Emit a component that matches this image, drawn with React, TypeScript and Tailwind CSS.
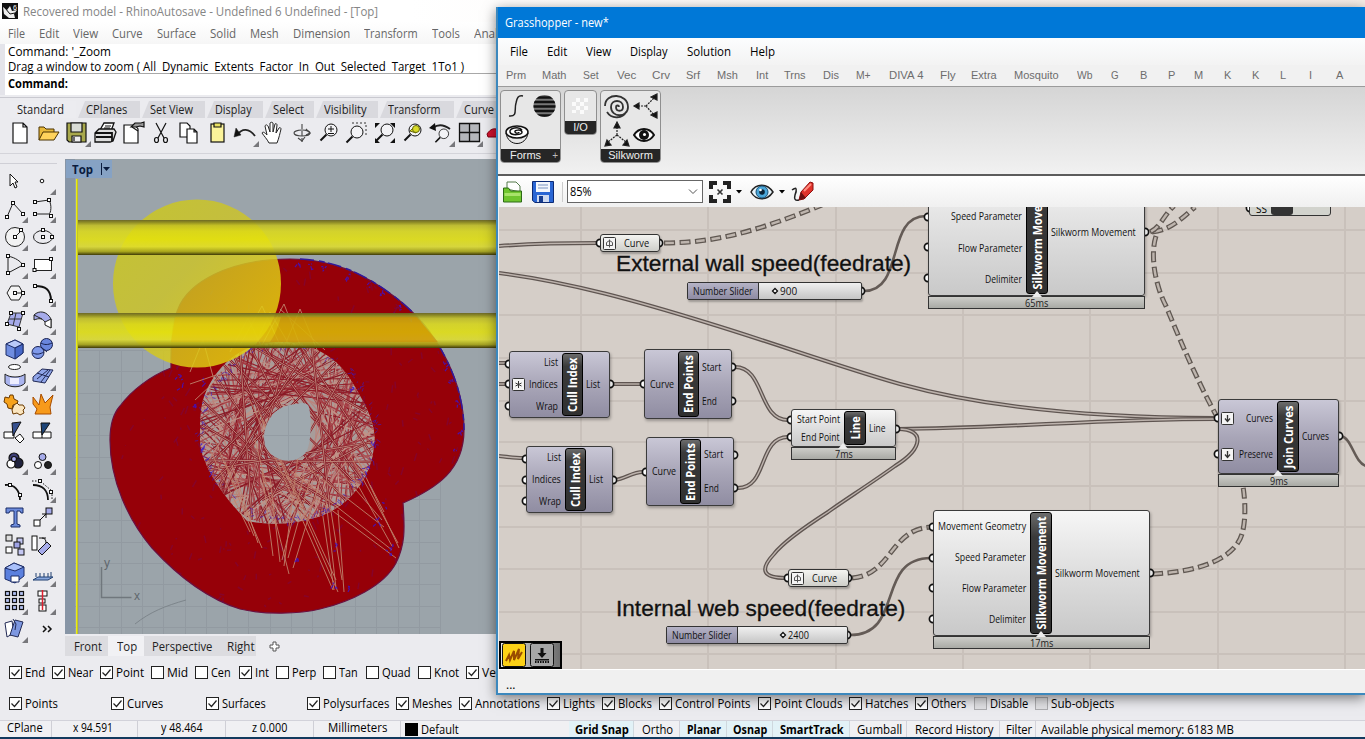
import React, { useLayoutEffect, useRef, useState } from "react";

/* Text squeezed or stretched to a given advance width */
function Fit({ w, children, className = "" }: { w: number; children: string; className?: string }) {
  const ref = useRef<HTMLSpanElement>(null);
  const [s, setS] = useState(1);
  useLayoutEffect(() => {
    const o = ref.current ? ref.current.offsetWidth : 0;
    if (o) setS(w / o);
  }, [w, children]);
  return (
    <span className={`inline-block shrink-0 ${className}`} style={{ width: w }}>
      <span ref={ref} className="inline-block origin-left whitespace-pre" style={{ transform: `scaleX(${s})` }}>
        {children}
      </span>
    </span>
  );
}

type Item = [string, number, number];

function Labels({ items, className = "" }: { items: Item[]; className?: string }) {
  return (
    <div className={`flex items-center ${className}`}>
      {items.map(([t, slot, w], i) => (
        <div key={i} className="flex shrink-0" style={{ width: slot }}>
          <Fit w={w}>{t}</Fit>
        </div>
      ))}
    </div>
  );
}

/* ---------- deterministic noise ---------- */
function rng(seed: number) {
  let s = seed;
  return () => {
    s = (s * 1664525 + 1013904223) % 4294967296;
    return s / 4294967296;
  };
}

/* ---------- toolbar icons, 28 x 28 ---------- */
const K = "#111";
const Lens = ({ children }: { children?: React.ReactNode }) => (
  <g fill="none" stroke={K} strokeWidth="1">
    <circle cx="16" cy="11" r="6" fill="#f3f3f6" />
    <path d="M11.500 15.500l-6 6" strokeWidth="2" />
    {children}
  </g>
);

const topIcons: [React.ReactNode, boolean][] = [
  [<path d="M6 4h10l4 4v16H6zM16 4v4h4" fill="#fff" stroke={K} strokeWidth="1.2" />, false],
  [<g stroke="#4a3200" strokeWidth="1"><path d="M4 21V8h5l2 2h8v3" fill="#e8b93a" /><path d="M4 21l4-8h16l-5 8z" fill="#ffd35c" /></g>, false],
  [<g stroke={K} strokeWidth="1.2"><path d="M4 4h19v19H6l-2-2z" fill="#a9a94c" /><path d="M8 4h11v9H8z" fill="#d9dcd6" /><path d="M9 17h9v6H9z" fill="#eee" /><path d="M11 18v4" /></g>, true],
  [<g stroke={K} strokeWidth="1.3" fill="#ddd"><path d="M9 11l4-7h10l-3 8z" fill="#fff" /><path d="M4 14l4-4h15l2 3-3 9-3 1H4z" /><path d="M4 14h17v8M5 18h16" strokeWidth="1.800" /><path d="M14 7h6M13 9h6" strokeWidth="1" /></g>, false],
  [<g stroke={K} strokeWidth="1.2"><path d="M5 6h11l3 4v14H5z" fill="#fff" /><path d="M12 8l4-4h6l3-1v5l-4-1-4 1z" fill="#999" /><path d="M13 8l6 4" /></g>, false],
  [<g stroke={K} strokeWidth="1.200" fill="none"><path d="M9 4l8 15M19 4l-8 15" /><ellipse cx="9.500" cy="21" rx="2" ry="2.500" /><ellipse cx="18.500" cy="21" rx="2" ry="2.500" /></g>, false],
  [<g stroke={K} strokeWidth="1.200" fill="#fff"><path d="M5 4h7l3 3v11H5z" /><path d="M12 10h7l3 3v11H12zM19 10v3h3" /></g>, false],
  [<g stroke={K} strokeWidth="1.200"><rect x="8" y="5" width="13" height="18" fill="#fbf39a" /><path d="M11 4h7v4h-7z" fill="#e8e060" /></g>, false],
  [<g fill="none" stroke="#222"><path d="M6 16c5-7 12-7 18 1" strokeWidth="1.800" /><path d="M3 18l2-9 5 7z" fill="#111" strokeWidth=".5" /></g>, true],
  [<path d="M10 24c-2-4-5-7-7-10 1-2 3 0 5 2L6 7c1-2 2-1 3 0l2 6V4c1-1 2-1 3 0v9l2-8c1-1 2 0 2 1l-1 8 3-5c1-1 2 0 2 1-1 4-2 9-4 14z" fill="#fff" stroke="#222" strokeWidth="1" />, false],
  [<g fill="none" stroke="#444" strokeWidth="1.100"><ellipse cx="15" cy="14" rx="8" ry="3" /><path d="M15 5v18" strokeDasharray="5 2" /><path d="M11 19l4 3 3-4M19 10l4 4-4 2" /></g>, false],
  [<Lens><path d="M13 10h6M16 7v6M13 14.500h6" /></Lens>, false],
  [<g><path d="M9 4h14v12" fill="none" stroke="#333" strokeDasharray="2 2" /><g transform="translate(-2 2)"><Lens /></g></g>, false],
  [<g fill="#111"><Lens /><path d="M4 4h5l-5 5zM24 4v5l-5-5zM24 24h-5l5-5zM4 24v-5l5 5z" /></g>, false],
  [<g><Lens /><path d="M11 12l4-4 5 0-3 6z" fill="#e3e12c" stroke="#6a6a10" /><circle cx="17" cy="10" r="3.500" fill="#d9dc28" stroke="#66690a" /></g>, false],
  [<g><g transform="translate(4 6) scale(.8)"><Lens /></g><path d="M6 9c5-4 10-4 17 1" fill="none" stroke="#222" strokeWidth="2" /><path d="M2 9l6-5 1 8z" fill="#111" /></g>, true],
  [<path d="M4.500 4.500h20v18h-20zM14.500 4v19M4 13.500h20" fill="#b4b6bb" stroke={K} strokeWidth="1.300" />, true],
  [<path d="M4 15c2-3 5-6 9-5l6 1v7H5z" fill="#d3122e" stroke="#7d0012" />, false],
];

const sq = (x: number, y: number, f = "#fff") => <rect key={`${x}-${y}`} x={x - 1.5} y={y - 1.5} width="3" height="3" fill={f} stroke={K} strokeWidth="1" />;
const B1 = "#8fa4e8";
const L1 = "#a6abea";

const sideIcons: [React.ReactNode, boolean][] = [
  [<path d="M10 7v12l3-3 2 5 2-1-2-5h3z" fill="#fff" stroke={K} />, false],
  [<circle cx="14" cy="14" r="1.800" fill="#fff" stroke={K} />, true],
  [<g fill="none" stroke="#222"><path d="M7 22l6-14 10 11" />{sq(7, 22)}{sq(13, 8)}{sq(23, 19)}</g>, true],
  [<g fill="none" stroke="#222"><path d="M7 7l14-2c3 5 2 13 0 14L7 19" />{sq(7, 7)}{sq(21, 5)}{sq(7, 19)}{sq(23, 21)}</g>, true],
  [<g fill="none" stroke="#222"><circle cx="15" cy="14" r="9.500" fill="#f2f2f2" /><path d="M15 14l7-7" />{sq(15, 14)}{sq(21, 7)}</g>, true],
  [<g fill="none" stroke="#222"><ellipse cx="15" cy="14" rx="9.500" ry="6.500" />{sq(15, 7)}{sq(15, 14)}{sq(24, 14)}</g>, true],
  [<g fill="none" stroke="#222"><path d="M8 5c8 2 12 5 15 9L8 22z" />{sq(8, 5)}{sq(23, 14)}{sq(8, 22)}</g>, true],
  [<g fill="none" stroke="#222"><rect x="6.500" y="8.500" width="17" height="11" fill="#fff" />{sq(6.5, 19)}{sq(23, 8)}</g>, true],
  [<g fill="none" stroke="#222"><path d="M7 14l4-7h8l4 7-4 7h-8z" fill="#f4f4f4" /><path d="M15 14h8" />{sq(15, 14)}{sq(23, 14)}</g>, true],
  [<g fill="none" stroke="#111"><path d="M7 7c10 0 16 3 16 15" strokeWidth="2" />{sq(7, 7)}{sq(23, 22)}</g>, true],
  [<g stroke="#333"><path d="M11 6l12 0-4 14-12-3z" fill={L1} /><path d="M9 12h12M16 6l-3 13" fill="none" />{sq(11, 6)}{sq(23, 6)}{sq(7, 17)}{sq(19, 22)}</g>, true],
  [<g stroke="#222"><path d="M6 8c5-5 13-4 17 4v9l-6-6C14 11 11 11 6 13z" fill={L1} /><path d="M6 8l8 4M17 15l6-3v9l-6-3z" fill="#fff" /></g>, true],
  [<g stroke="#1d2c66"><path d="M6 9l9-4 8 4v9l-8 6-9-4z" fill="#6f8de0" /><path d="M6 9l9-4 8 4-8 4z" fill="#b9c9f8" /><path d="M15 13v11l8-6V9z" fill="#4768c8" /></g>, true],
  [<g stroke="#17204f"><circle cx="18.500" cy="9.500" r="6" fill="#6a86dd" /><circle cx="10" cy="17.500" r="6" fill="#7f99ea" /><path d="M13 12l6 5M5 18c4 2 7 1 11-1M13 8c3 2 7 2 11 0" fill="none" /></g>, true],
  [<g stroke="#222"><ellipse cx="14.500" cy="4" rx="6" ry="2.500" fill="#fff" /><path d="M5 11v9c4 5 16 5 20 0v-9c-4 4-16 4-20 0z" fill="#aab4ee" /><path d="M10 15h9v6h-9z" fill="#eef" stroke="none" /></g>, true],
  [<g stroke="#222a55"><path d="M5 14l9-8 11 1-8 13-12-2z" fill={B1} /><path d="M9 16l11-9M13 19l9-12M9 10l12 4" fill="none" /></g>, true],
  [<g stroke="#6b3a00"><path d="M5 6l4 1 1-3h3l1 4 4 2-1 3-4 1-1 4-4-1-1-4-3-2z" fill="#f6a21c" /><path d="M14 14l3-2 2 2 4 0 2 3-2 2 1 3-4 2-3-2-4 1-1-4z" fill="#fbe6c0" /></g>, false],
  [<path d="M5 6l6 8 2-11 4 9 8-8-3 12 1 7H7l2-5-4-5z" fill="#f79a1b" stroke="#a74c00" />, false],
  [<g stroke="#111"><path d="M4 13h10v6H4z" fill="#fff" /><path d="M15 19l5-4 4 5-4 4z" fill="#fff" /><path d="M12 4l9-1-8 14z" fill="#36508f" /></g>, false],
  [<g stroke="#111"><path d="M5 13h18v6H5zM14 13v6" fill="#fff" /><path d="M13 4h9l-8 12z" fill="#1d4478" /></g>, false],
  [<g stroke="#111" strokeWidth="1.200"><circle cx="14" cy="11" r="5" fill="#3c3d75" /><circle cx="18" cy="16" r="5" fill="#20233e" /><circle cx="11" cy="17" r="4" fill="#fff" /><circle cx="14" cy="12" r="2.500" fill="#a9acf0" /></g>, true],
  [<g stroke="#111"><circle cx="14.500" cy="10" r="3.500" fill={L1} /><circle cx="10" cy="18" r="3.500" fill="#fff" /><circle cx="20" cy="18" r="3.500" fill="#222" /></g>, true],
  [<g fill="none" stroke="#111"><path d="M5 10c9-1 15 5 15 15" strokeWidth="1.800" />{sq(10, 10)}{sq(20, 20)}</g>, false],
  [<g fill="none" stroke="#111"><path d="M5 10c9 0 15 5 15 15" strokeWidth="1.800" /><path d="M4 6h8l12 10v9" strokeDasharray="1.500 1.500" />{sq(12, 6)}{sq(23, 17)}</g>, true],
  [<path d="M6 5h17v5h-2l-1-2h-3v13l3 1v2h-9v-2l3-1V8h-4l-1 2H6z" fill="#6c8bdc" stroke="#1b2c66" />, false],
  [<g stroke="#111"><rect x="6" y="17" width="6" height="6" fill="#fff" /><rect x="18" y="5" width="6" height="6" fill={L1} /><path d="M12 17l6-6M14 11h4v4" fill="none" /></g>, true],
  [<g stroke="#111" fill="#c4c7f2"><rect x="6" y="4" width="6" height="6" fill="#ddd" /><rect x="17" y="7" width="6" height="6" /><rect x="14" y="11" width="6" height="6" fill="#9fa3e4" /><rect x="6" y="16" width="6" height="6" fill="#fff" /><rect x="18" y="18" width="6" height="6" /></g>, false],
  [<g stroke="#111"><rect x="4" y="5" width="5" height="14" fill="#fff" /><path d="M11 7h7M14 7c3 0 4 2 4 5" fill="none" /><path d="M10 20l9-9 4 4-9 9z" fill={L1} /></g>, false],
  [<g stroke="#1d2c66"><path d="M5 9l9-5 10 4v9l-9 7-10-4z" fill="#5b80de" /><path d="M5 9l9-5 10 4-9 4z" fill="#a9c0fa" /><path d="M11 17h8v6h-8z" fill="#fff" /></g>, true],
  [<g stroke="#1f3f70" fill="none"><path d="M5 21l5-3h15l-5 3z" fill="#89a7dd" /><path d="M8 14v4M12 14v4M16 14v4M20 14v4M23 13v5" /></g>, true],
  [<g>{[5.5, 12.5, 19.5].map((x) => [4.5, 11.5, 18.5].map((y) => <rect key={`${x}${y}`} x={x} y={y} width="4" height="4" fill="#b4c2f3" stroke="#111" strokeWidth="1.200" />))}</g>, true],
  [<g stroke="#111" fill="#fff"><rect x="10" y="4" width="9" height="5" /><rect x="11" y="12" width="6" height="4" /><rect x="11" y="18" width="7" height="6" /><path d="M14.500 3v20" stroke="#e02030" strokeWidth="1.500" /></g>, true],
  [<g stroke="#222a55"><path d="M5 8l7-2 2 12-7 4z" fill="#fff" /><path d="M15 5l8 2-5 15-8-2z" fill="#7d97e0" /><path d="M13 4l3 5-1 6" fill="none" /></g>, true],
  [<path d="M16 11l3 3-3 3M21 11l3 3-3 3" transform="translate(-1 0)" fill="none" stroke="#111" strokeWidth="1.500" />, false],
];

function Ico({ icon, corner }: { icon: React.ReactNode; corner: boolean }) {
  return (
    <svg width="28" height="28" viewBox="0 0 28 28" className="block shrink-0">
      {icon}
      {corner && <path d="M28 22v6h-6z" fill="#77777b" />}
    </svg>
  );
}

/* ---------- model viewport ---------- */
const BODY =
  "M110 440C110 425 113 414 120 406C131 391 150 376 171 368C171 345 171 325 178 309C188 283 228 259 290 259C330 259 362 272 395 297C440 331 464 385 464 430C464 470 437 488 403 503C405 530 405 545 396 563C384 586 350 602 320 609C300 614 265 615 240 609C205 598 175 573 152 548C128 520 110 480 110 440Z";
const WEB = "M203 400C212 372 232 352 258 345C300 335 335 352 352 382C366 405 377 425 374 445C372 480 345 512 310 519C285 526 262 524 247 521C232 505 201 470 200 440C200 425 200 412 203 400Z";

function buildWeb() {
  const r = rng(11);
  const out: { d: string; c: string; w: number }[] = [];
  const cols = ["#93202b", "#a53a42", "#bb837c", "#8a1a26", "#ab5053", "#c09488"];
  for (let i = 0; i < 210; i++) {
    const a = (i / 210) * Math.PI * 2 + r() * 0.05;
    const delta = Math.PI * (0.5 + r() * 0.33) * (i % 2 ? 1 : -1);
    const p = (t: number) => [288 + Math.cos(t) * 90, 434 + Math.sin(t) * 93];
    const [x1, y1] = p(a);
    const [x2, y2] = p(a + delta);
    out.push({ d: `M${x1.toFixed(1)} ${y1.toFixed(1)}L${x2.toFixed(1)} ${y2.toFixed(1)}`, c: cols[Math.floor(r() * cols.length)], w: 0.8 + r() * 0.6 });
  }
  return out;
}

function buildSpecks() {
  const r = rng(5);
  const out: { d: string; c: string; o: number }[] = [];
  for (let i = 0; i < 150; i++) {
    const a = r() * Math.PI * 2;
    const k = 0.95 + r() * 0.09;
    const x = 288 + Math.cos(a) * 87 * k;
    const y = 432 + Math.sin(a) * 88 * k;
    if (y > 500 && x < 250) continue;
    out.push({ d: `M${x.toFixed(1)} ${y.toFixed(1)}l${(r() * 8 - 4).toFixed(1)} ${(r() * 9 - 4).toFixed(1)}`, c: "#3a1cc0", o: 0.65 });
  }
  for (let i = 0; i < 330; i++) {
    const x = 115 + r() * 345;
    const y = 262 + r() * 345;
    out.push({ d: `M${x.toFixed(1)} ${y.toFixed(1)}l${(r() * 8 - 3).toFixed(1)} ${(r() * 16 - 8).toFixed(1)}`, c: "#650a78", o: 0.3 });
  }
  return out;
}
const web = buildWeb();
const specks = buildSpecks();
const rimSpecks = (() => {
  const r = rng(3);
  const pts: [number, number][] = [[300, 262], [312, 265], [325, 268], [350, 276], [370, 284], [383, 293], [400, 306], [412, 317], [446, 364], [452, 380], [458, 402], [460, 430], [455, 450], [393, 545], [390, 553], [385, 505], [378, 520], [350, 586], [335, 585], [338, 547], [297, 560], [205, 380], [180, 377], [196, 405], [203, 447], [213, 475], [182, 385], [368, 470], [375, 443], [355, 388]];
  return pts.flatMap(([x, y]) => Array.from({ length: 4 }, () => `M${(x + r() * 5 - 3).toFixed(1)} ${(y + r() * 7 - 3).toFixed(1)}l${(r() * 5 - 3).toFixed(1)} ${(r() * 6 - 2).toFixed(1)}`));
})();
const spikes = [
  "M215 440L254 536", "M232 465L258 543", "M210 450L250 532", "M225 462L262 548", "M255 440L289 574", "M300 440L284 566", "M262 470L273 556", "M270 478L280 562",
  "M320 480L293 568", "M310 480L288 558", "M304 476L282 560", "M250 400L333 590", "M262 420L338 592", "M258 410L336 580", "M322 510L334 590", "M330 505L342 580", "M338 510L344 592", "M326 500L336 588",
  "M275 468L396 558", "M290 470L392 550", "M300 462L384 527", "M350 455L398 543", "M345 462L392 546", "M358 460L399 548", "M330 460L382 520", "M370 485L384 512",
];
const chords = [
  "M205 360L300 500", "M215 355L345 500", "M232 352L305 510", "M250 346L330 505", "M200 398L310 505", "M203 425L340 508", "M226 356L352 480", "M262 344L360 478", "M288 344L248 505", "M320 350L205 470", "M336 362L215 480", "M240 350L252 520",
  "M366 412L250 345", "M372 440L262 500", "M205 460L374 462", "M208 470L372 442", "M220 485L310 345", "M300 345L372 455", "M312 348L330 510", "M258 520L345 372",
];

function Viewport() {
  const gx = Array.from({ length: 18 }, (_, i) => 78.5 + Math.round(i * 21.3));
  const gy = Array.from({ length: 14 }, (_, i) => 350.5 + Math.round(i * 21.3));
  return (
    <div className="relative h-[475px] w-[432px] overflow-hidden bg-[#9ba4aa]">
      <svg width="432" height="475" viewBox="65 159 432 475" className="block">
        <defs>
          <linearGradient id="cyl" x1="0" y1="0" x2="0" y2="1">
            <stop offset="0" stopColor="#6a6522" stopOpacity=".95" />
            <stop offset=".07" stopColor="#8f8c20" stopOpacity=".95" />
            <stop offset=".16" stopColor="#c5c120" stopOpacity=".86" />
            <stop offset=".32" stopColor="#dedb14" stopOpacity=".84" />
            <stop offset=".55" stopColor="#e6e30a" stopOpacity=".84" />
            <stop offset=".76" stopColor="#e2df28" stopOpacity=".84" />
            <stop offset=".9" stopColor="#a5a218" stopOpacity=".92" />
            <stop offset="1" stopColor="#3d3808" />
          </linearGradient>
          <linearGradient id="sph" x1="0" y1="0" x2="1" y2=".9">
            <stop offset="0" stopColor="#cbc91c" stopOpacity=".85" />
            <stop offset=".45" stopColor="#cdc426" stopOpacity=".82" />
            <stop offset="1" stopColor="#ead208" stopOpacity=".86" />
          </linearGradient>
          <clipPath id="webclip"><path d={WEB} /></clipPath>
          <clipPath id="bodyclip"><path d={BODY} /></clipPath>
        </defs>
        <g stroke="#8f979e" strokeWidth="1" opacity=".75">
          {gx.map((x) => <path key={x} d={`M${x} 350V634`} />)}
          {gy.map((y) => <path key={y} d={`M65 ${y}H440`} />)}
        </g>
        <rect x="65" y="159" width="10" height="475" fill="#8795a6" />
        <path d="M135 624C150 612 165 606 186 600" fill="none" stroke="#7d858b" />
        <path d="M101.500 567v30.500h30" fill="none" stroke="#70777d" strokeWidth="1.500" />
        <text x="104" y="567" fontFamily="Liberation Sans" fontSize="12" fill="#60676d">y</text>
        <text x="134" y="600" fontFamily="Liberation Sans" fontSize="12" fill="#60676d">x</text>
        <path d={BODY} fill="#960008" stroke="#6a1040" strokeWidth="1.200" />
        <path d="M300 259C335 261 362 272 395 297C440 331 464 385 464 430" fill="none" stroke="#31189c" strokeWidth="1.500" strokeDasharray="14 5 6 3" />
        <g clipPath="url(#bodyclip)" fill="none">
          {specks.filter((s) => s.o < 0.5).map((s, i) => <path key={i} d={s.d} stroke={s.c} opacity={s.o} strokeWidth="1.500" />)}
        </g>
        <path d={WEB} fill="#a89c9a" />
        <g clipPath="url(#webclip)" fill="none">
          {web.map((l, i) => <path key={i} d={l.d} stroke={l.c} strokeWidth={l.w} />)}
          {chords.map((d) => <g key={d}><path d={d} stroke="#841824" strokeWidth="2.200" /><path d={d} stroke="#c38d80" strokeWidth=".9" /></g>)}
        </g>
        <g fill="none" stroke="#c0826c" strokeWidth=".9">
          {spikes.map((d) => <path key={d} d={d} />)}
          <path d="M190 372L203 340L214 380M195 400L225 372L190 384M230 352L248 318L262 348M240 345L262 306L280 345M255 346L270 312L290 346M262 345L284 304L300 345M285 345L300 309L318 352M280 309L325 350" />
        </g>
        <path d="M264 437C265 420 276 407 290 405C299 403 307 401 309 407C312 420 311 445 306 452C300 462 284 463 275 457C268 453 264 445 264 437Z" fill="#9fa8ae" />
        <path d="M288.500 406v55M265 435.500h45" stroke="#949ca3" />
        <g fill="none">
          {specks.filter((s) => s.o > 0.5).map((s, i) => <path key={i} d={s.d} stroke={s.c} opacity={s.o} />)}
        </g>
        <g stroke="#3a14d0" fill="none" strokeWidth="1.200" opacity=".8">{rimSpecks.map((d, i) => <path key={i} d={d} />)}</g>
        <circle cx="197" cy="283.500" r="84" fill="url(#sph)" />
        <rect x="77" y="220" width="420" height="35" fill="url(#cyl)" />
        <rect x="77" y="313" width="420" height="35" fill="url(#cyl)" />
        <path d="M175 317H281Q277 332 270 342H171z" fill="#e6b400" opacity=".3" />
        <path d="M281 317H417L438 342H270Q277 332 281 317z" fill="#cc8800" opacity=".5" />
        <path d="M76.500 179V634" stroke="#e9ec18" strokeWidth="1" />
        <path d="M77.500 179V634" stroke="#c3c622" strokeWidth="1" />
      </svg>
      <div className="absolute top-px left-px flex h-[18px] w-[46px] items-center bg-[#86a2c4] pl-1.5 text-[12px] font-bold text-[#0b1c3e]">
        <Fit w={21}>Top</Fit>
        <svg width="12" height="14" className="ml-[7px]"><path d="M1.500 1v12" stroke="#0b1c3e" /><path d="M3 5h7l-3.500 4z" fill="#0b1c3e" /></svg>
      </div>
    </div>
  );
}

/* ---------- Rhino bottom rows ---------- */
type Check = [string, number, number, 0 | 1 | 2];
function Checks({ items, className }: { items: Check[]; className: string }) {
  return (
    <div className={`flex items-center pl-[9px] text-[12px] text-black ${className}`}>
      {items.map(([t, slot, w, st]) => (
        <div key={t} className="flex shrink-0 items-center gap-[3px]" style={{ width: slot }}>
          <svg width="13" height="13" className={st === 2 ? "shrink-0 opacity-30" : "shrink-0"}>
            <rect x=".5" y=".5" width="12" height="12" fill={st === 2 ? "#ccc" : "#fff"} stroke="#222" />
            {st === 1 && <path d="M2.500 6.500l3 3 5-6" fill="none" stroke="#222" strokeWidth="1.200" />}
          </svg>
          <Fit w={w}>{t}</Fit>
        </div>
      ))}
    </div>
  );
}

const osnaps: Check[] = [["End", 43, 20, 1], ["Near", 48, 25, 1], ["Point", 51, 28, 1], ["Mid", 44, 21, 0], ["Cen", 44, 20, 0], ["Int", 37, 14, 1], ["Perp", 47, 24, 0], ["Tan", 43, 19, 0], ["Quad", 52, 29, 0], ["Knot", 48, 25, 0], ["Vertex", 60, 36, 1]];
const filters: Check[] = [["Points", 102, 33, 1], ["Curves", 95, 36, 1], ["Surfaces", 101, 44, 1], ["Polysurfaces", 89, 66, 1], ["Meshes", 63, 40, 1], ["Annotations", 88, 65, 1], ["Lights", 55, 32, 1], ["Blocks", 57, 34, 1], ["Control Points", 99, 76, 1], ["Point Clouds", 91, 68, 1], ["Hatches", 66, 43, 1], ["Others", 59, 35, 1], ["Disable", 61, 38, 2], ["Sub-objects", 90, 63, 2]];
const rhinoTabs: Item[] = [["Standard", 75, 47], ["CPlanes", 64, 41], ["Set View", 65, 43], ["Display", 58, 37], ["Select", 51, 31], ["Visibility", 64, 43], ["Transform", 76, 53], ["Curve Tools", 60, 60]];
const panes: [string, number, number, boolean][] = [["Grid Snap", 65, 54, true], ["Ortho", 46, 31, false], ["Planar", 47, 34, true], ["Osnap", 46, 34, true], ["SmartTrack", 77, 64, true], ["Gumball", 57, 45, false], ["Record History", 93, 78, false], ["Filter", 36, 26, false]];

function Rhino() {
  return (
    <div className="flex h-[739px] w-[1365px] flex-col bg-[#ebebef]">
      <div className="flex h-[22px] shrink-0 items-center bg-gradient-to-r from-white from-30% to-[#f5ece6] pl-[2px] text-[12px] text-[#858585]">
        <svg width="17" height="17" viewBox="0 0 17 17" className="mr-1 shrink-0"><rect width="16" height="16" fill="#111" /><path d="M1 4l4 3 3-4 2 5 5-1-3 4 1 4H7l-5-4z" fill="#eee" /><path d="M3 5l5 6 5-1M9 2l2 4" stroke="#111" fill="none" /><text x="11" y="7" fontSize="7" fill="#fff" fontFamily="Liberation Sans">6</text></svg>
        <Fit w={355}>Recovered model - RhinoAutosave - Undefined 6 Undefined - [Top]</Fit>
      </div>
      <Labels
        className="h-[22px] shrink-0 bg-gradient-to-b from-white to-[#f6f6f6] pl-2 text-[12px] text-[#666]"
        items={[["File", 31, 17], ["Edit", 34, 20], ["View", 39, 25], ["Curve", 45, 31], ["Surface", 53, 39], ["Solid", 40, 26], ["Mesh", 43, 29], ["Dimension", 71, 57], ["Transform", 68, 54], ["Tools", 42, 28], ["Analyze", 48, 42]]}
      />
      <div className="flex h-[51px] w-[600px] shrink-0 flex-col border-l-[5px] border-[#e4e4ea] bg-white pl-[3px] text-[12px] text-black">
        <div className="flex h-[15px] items-center"><Fit w={103}>Command: '_Zoom</Fit></div>
        <div className="flex h-[15px] items-center border-b border-[#a8a8a8]"><Fit w={456}>Drag a window to zoom ( All  Dynamic  Extents  Factor  In  Out  Selected  Target  1To1 )</Fit></div>
        <div className="flex h-[18px] items-center font-bold"><Fit w={60}>Command:</Fit></div>
      </div>
      <div className="mt-[2px] h-px shrink-0 bg-[#c9c9d0]" />
      <div className="mt-[3px] flex h-[17px] shrink-0 items-stretch pl-[10px] text-[12px] text-[#222]">
        {rhinoTabs.map(([t, slot, w], i) => (
          <div key={t} className={i === 0 ? "flex items-center bg-[#ececf0] pl-[7px]" : "flex items-center"} style={{ width: i === 0 ? slot - 9 : slot }}>
            {i > 0 && <svg width="10" height="17" className="shrink-0"><path d="M9 0L2 17h8V0z" fill="#d9d9de" /></svg>}
            {i === 0 ? <Fit w={w}>{t}</Fit> : <div className="flex h-[17px] grow items-center bg-[#d9d9de]"><Fit w={w}>{t}</Fit></div>}
          </div>
        ))}
      </div>
      <div className="flex h-[35px] shrink-0 pt-px pl-[7px]">
        {topIcons.map(([ic, c], i) => <Ico key={i} icon={ic} corner={c} />)}
      </div>
      <div className="mb-[4px] h-[2px] shrink-0 border-t border-[#d4d4da]" />
      <div className="flex h-[475px] shrink-0">
        <div className="w-[65px] shrink-0 pt-[4px]">
          <div className="mb-[3px] h-px w-[57px] bg-[#cfcfd6]" />
          <div className="grid w-[56px] grid-cols-2">
            {sideIcons.map(([ic, c], i) => <Ico key={i} icon={ic} corner={c} />)}
          </div>
        </div>
        <Viewport />
      </div>
      <div className="flex h-[24px] shrink-0 items-center pl-[65px] text-[12px] text-[#222]">
        <div className="flex h-[20px] w-[43px] items-center bg-[#dcdce0] pl-[9px]"><Fit w={28}>Front</Fit></div>
        <div className="flex h-[20px] w-[36px] items-center bg-[#f1f1f4] pl-[9px]"><Fit w={20}>Top</Fit></div>
        <div className="flex h-[20px] w-[75px] items-center bg-[#dcdce0] pl-[8px]"><Fit w={60}>Perspective</Fit></div>
        <div className="flex h-[20px] w-[37px] items-center bg-[#dcdce0] pl-[8px]"><Fit w={28}>Right</Fit></div>
        <svg width="26" height="20" className="ml-[6px]"><path d="M11 6h3v3h3v3h-3v3h-3v-3H8V9h3z" fill="#fff" stroke="#555" /></svg>
      </div>
      <Checks items={osnaps} className="h-[28px] w-[497px] shrink-0 overflow-hidden" />
      <Checks items={filters} className="h-[35px] shrink-0 border-b border-[#d2d2da]" />
      <div className="flex min-h-0 grow items-center overflow-hidden bg-[#f0f0f3] pl-[7px] text-[12px] text-black">
        <div className="flex w-[66px]"><Fit w={36}>CPlane</Fit><i className="ml-2 h-[18px] w-px bg-[#cfcfd6]" /></div>
        <div className="flex w-[88px]"><Fit w={40}>x 94.591</Fit><i className="ml-6 h-[18px] w-px bg-[#cfcfd6]" /></div>
        <div className="flex w-[91px]"><Fit w={42}>y 48.464</Fit><i className="ml-[22px] h-[18px] w-px bg-[#cfcfd6]" /></div>
        <div className="flex w-[76px]"><Fit w={35}>z 0.000</Fit><i className="ml-[26px] h-[18px] w-px bg-[#cfcfd6]" /></div>
        <div className="flex w-[77px]"><Fit w={59}>Millimeters</Fit><i className="ml-[13px] h-[18px] w-px bg-[#cfcfd6]" /></div>
        <div className="flex w-[164px] items-center"><div className="mr-[3px] h-[13px] w-[13px] bg-black" /><Fit w={38}>Default</Fit></div>
        {panes.map(([t, slot, w, on]) => (
          <div key={t} className={on ? "flex h-[20px] items-center justify-center border-r border-[#cfd8de] bg-[#e2f2f7] pl-px font-bold" : "flex h-[20px] items-center justify-center border-r border-[#d2d2da] pl-[2px]"} style={{ width: slot }}>
            <Fit w={w}>{t}</Fit>
          </div>
        ))}
        <Fit w={193} className="ml-[5px]">Available physical memory: 6183 MB</Fit>
      </div>
      <div className="h-[2px] shrink-0 bg-[#123a5e]" />
    </div>
  );
}

/* ---------- Grasshopper canvas ---------- */
type Port = [string, number, string?];
interface NodeP { x: number; y: number; w: number; h: number; bar: number; barW: number; title: string; tw: number; ins: Port[]; outs: Port[]; ms?: string; light?: boolean }

const nodes: NodeP[] = [
  { x: 928, y: 169, w: 217, h: 127, bar: 1026, barW: 22, title: "Silkworm Movement", tw: 113, light: true, ms: "65ms", ins: [["Movement Geometry", 88], ["Speed Parameter", 71], ["Flow Parameter", 64], ["Delimiter", 37]], outs: [["Silkworm Movement", 85]] },
  { x: 509, y: 351, w: 101, h: 67, bar: 562, barW: 21, title: "Cull Index", tw: 54, ins: [["List", 14], ["Indices", 29, "*"], ["Wrap", 22]], outs: [["List", 14]] },
  { x: 644, y: 349, w: 88, h: 70, bar: 678, barW: 21, title: "End Points", tw: 58, ins: [["Curve", 24]], outs: [["Start", 19], ["End", 15]] },
  { x: 526, y: 446, w: 87, h: 67, bar: 565, barW: 21, title: "Cull Index", tw: 54, ins: [["List", 14], ["Indices", 29], ["Wrap", 22]], outs: [["List", 14]] },
  { x: 646, y: 437, w: 88, h: 69, bar: 680, barW: 21, title: "End Points", tw: 58, ins: [["Curve", 24]], outs: [["Start", 19], ["End", 15]] },
  { x: 791, y: 409, w: 105, h: 38, bar: 844, barW: 22, title: "Line", tw: 23, light: true, ms: "7ms", ins: [["Start Point", 43], ["End Point", 39]], outs: [["Line", 17]] },
  { x: 1218, y: 399, w: 121, h: 75, bar: 1277, barW: 22, title: "Join Curves", tw: 63, ms: "9ms", ins: [["Curves", 27, "d"], ["Preserve", 34, "d"]], outs: [["Curves", 27]] },
  { x: 933, y: 510, w: 217, h: 126, bar: 1030, barW: 22, title: "Silkworm Movement", tw: 113, light: true, ms: "17ms", ins: [["Movement Geometry", 88], ["Speed Parameter", 71], ["Flow Parameter", 64], ["Delimiter", 37]], outs: [["Silkworm Movement", 85]] },
];

function Badge({ kind }: { kind: string }) {
  return (
    <svg width="13" height="13" className="shrink-0">
      <rect x=".5" y=".5" width="12" height="12" rx="1" fill="#f4f4f4" stroke="#333" />
      {kind === "*" && <path d="M6.500 3v7M3.500 5l6 3M9.500 5l-6 3" stroke="#333" />}
      {kind === "d" && <path d="M6.500 3v6M4 6.500l2.500 3 2.500-3" fill="none" stroke="#333" strokeWidth="1.300" />}
      {kind === "g" && <path d="M6.500 2.500v8M3.500 5.500l3-2 3 2M3.500 5.500v3h6v-3" fill="none" stroke="#555" />}
    </svg>
  );
}

function GNode(n: NodeP) {
  return (
    <div className="absolute flex flex-col" style={{ left: n.x - 499, top: n.y - 207, width: n.w }}>
      <div
        className={`flex shrink-0 rounded-[3px] border border-[#3b3b3b] text-[10px] text-[#111] shadow-[1px_2px_3px_rgba(0,0,0,0.28)] ${n.light ? "bg-gradient-to-b from-[#f6f6f6] via-[#dedede] to-[#c9c9c9]" : "bg-gradient-to-b from-[#c9c7d6] via-[#a9a6b8] to-[#908da2]"}`}
        style={{ height: n.h }}
      >
        <div className="flex shrink-0 flex-col justify-around pr-1 pl-[2px]" style={{ width: n.bar - n.x - 1 }}>
          {n.ins.map(([t, w, b], i) => (
            <div key={i} className="flex h-[13px] items-center">
              {b && <Badge kind={b} />}
              <Fit w={w} className="ml-auto">{t}</Fit>
            </div>
          ))}
        </div>
        <div className="my-px flex shrink-0 items-center justify-center rounded-[3px] border border-black bg-gradient-to-b from-[#6c6c6c] via-[#3a3a3a] via-20% to-[#303030]" style={{ width: n.barW }}>
          <div className="flex shrink-0 -rotate-90 text-[12px] leading-none font-bold text-white"><Fit w={n.tw}>{n.title}</Fit></div>
        </div>
        <div className="flex grow flex-col justify-around pl-[3px]">
          {n.outs.map(([t, w], i) => <div key={i} className="flex h-[13px] items-center"><Fit w={w}>{t}</Fit></div>)}
        </div>
      </div>
      {n.ms && (
        <div className="flex h-[13px] shrink-0 items-center justify-center border border-[#333] bg-gradient-to-b from-[#cdcdc9] to-[#a9aaa5] text-[10px] leading-none text-[#222]">
          <Fit w={n.ms.length > 3 ? 23 : 18}>{n.ms}</Fit>
        </div>
      )}
    </div>
  );
}

const doubles = [
  "M499 246C540 243 570 243 598 243",
  "M499 273C570 282 640 302 708 323C780 345 840 367 900 384C980 406 1080 418 1216 418",
  "M898 429C1010 428 1100 419 1216 419",
  "M898 429C925 429 924 448 895 466C870 484 840 503 828 512C800 530 781 545 774 554C759 570 763 578 786 578",
  "M612 384H642", "M615 480C625 479 632 472 643 472", "M735 367C765 367 758 420 788 420", "M738 488C768 488 758 437 788 437",
  "M499 363H507", "M499 384H507", "M499 456C508 457 515 458 523 458",
];
const dashes = [
  "M664 243C720 243 765 228 822 205",
  "M852 578C892 575 890 529 931 527",
  "M1152 232C1170 230 1180 220 1195 207", "M1150 232C1160 228 1163 216 1174 206", "M1156 236C1150 255 1155 285 1166 306C1182 345 1198 382 1216 415",
  "M1152 574C1200 572 1238 558 1243 530C1246 515 1245 500 1243 486",
];
const singles = ["M864 291C905 291 885 216 926 216", "M850 635C905 635 875 558 931 558", "M1341 436C1352 438 1354 462 1366 466"];
const ports: [number, number][] = [
  [600, 243], [659, 243], [861, 291], [928, 217], [928, 247], [928, 278], [1145, 232],
  [509, 364], [509, 384], [509, 406], [610, 384], [644, 384], [732, 367], [732, 401],
  [526, 459], [526, 480], [526, 501], [613, 480], [646, 472], [734, 455], [734, 488],
  [791, 420], [791, 437], [896, 429], [1218, 418], [1218, 454], [1339, 436],
  [933, 527], [933, 558], [933, 588], [933, 619], [1150, 573], [788, 578], [848, 578], [847, 635], [1250, 208],
];

function Param({ x, y, w }: { x: number; y: number; w: number }) {
  return (
    <div className="absolute flex h-[18px] items-center rounded-[3px] border border-[#333] bg-gradient-to-b from-[#f4f4f1] to-[#cfcfca] pl-[2px] text-[10px] text-[#111] shadow-[1px_2px_2px_rgba(0,0,0,0.25)]" style={{ left: x - 499, top: y - 207, width: w }}>
      <Badge kind="g" />
      <Fit w={25} className="ml-[8px]">Curve</Fit>
    </div>
  );
}

function Slider({ x, y, w, lw, pad, value, vw }: { x: number; y: number; w: number; lw: number; pad: number; value: string; vw: number }) {
  return (
    <div className="absolute flex h-[18px] items-stretch rounded-[2px] border border-[#333] bg-gradient-to-b from-[#f0f0f0] to-[#c6c6c6] text-[10px] text-[#111] shadow-[1px_2px_2px_rgba(0,0,0,0.25)]" style={{ left: x - 499, top: y - 207, width: w }}>
      <div className="flex shrink-0 items-center justify-center border-r border-[#333] bg-gradient-to-b from-[#b5b3c6] to-[#8e8ba3]" style={{ width: lw }}><Fit w={60}>Number Slider</Fit></div>
      <div className="flex items-center" style={{ paddingLeft: pad }}>
        <svg width="8" height="8" className="mr-px shrink-0"><path d="M4 1.500L6.500 4 4 6.500 1.500 4z" fill="#fff" stroke="#111" strokeWidth="1.300" /></svg>
        <Fit w={vw}>{value}</Fit>
      </div>
    </div>
  );
}

function Canvas() {
  return (
    <div className="relative h-[462px] w-[866px] shrink-0 overflow-hidden bg-[#d5cec8]">
      <svg width="866" height="462" viewBox="499 207 866 462" className="block">
        <g stroke="#c4bcb6" strokeWidth="2" opacity=".7">
          {[581, 708, 836, 963, 1090, 1218, 1345].map((x) => <path key={x} d={`M${x} 207V669`} />)}
          {[230, 273, 315, 358, 401, 442, 486, 527, 569, 612, 654].map((y) => <path key={y} d={`M499 ${y}H1365`} />)}
        </g>
        <g fill="none">
          {doubles.map((d) => <g key={d}><path d={d} stroke="#5f5551" strokeWidth="4" /><path d={d} stroke="#bdb3ad" strokeWidth="1.400" /></g>)}
          {dashes.map((d) => <g key={d}><path d={d} stroke="#5f5751" strokeWidth="5" strokeDasharray="11 4.500" /><path d={d} stroke="#beb5ae" strokeWidth="2.400" strokeDasharray="8.600 6.900" strokeDashoffset="-1.200" /></g>)}
          {singles.map((d) => <path key={d} d={d} stroke="#645b56" strokeWidth="2.600" />)}
        </g>
        {ports.map(([x, y]) => <circle key={`${x}-${y}`} cx={x} cy={y} r="3.600" fill="#fff" stroke="#111" strokeWidth="1.700" />)}
      </svg>
      <div className="absolute top-[-14px] left-[750px] flex h-[23px] w-[82px] items-end rounded-[3px] border border-[#333] bg-[#d2d3cd] pl-1.5 text-[10px] leading-[12px]">
        <Fit w={11}>SS</Fit>
        <div className="ml-1 h-[20px] w-[22px] rounded-[3px] bg-[#333]" />
      </div>
      {nodes.map((n) => <GNode key={`${n.x}-${n.y}`} {...n} />)}
      <svg width="866" height="462" viewBox="499 207 866 462" className="absolute top-0 left-0">
        {[[1037, 297], [843, 449], [1278, 476], [1041, 637]].map(([x, y]) => <path key={x} d={`M${x - 5} ${y}l5-6 5 6z`} fill="#ececec" />)}
      </svg>
      <Param x={600} y={234} w={60} />
      <Param x={788} y={569} w={61} />
      <Slider x={687} y={282} w={175} lw={71} pad={12} value="900" vw={17} />
      <Slider x={666} y={626} w={182} lw={71} pad={41} value="2400" vw={21} />
      <div className="absolute top-[45px] left-[117px] font-['Liberation_Sans',sans-serif] text-[22px] leading-[24px] text-[#111] [-webkit-text-stroke:0.3px_#111]"><Fit w={295}>External wall speed(feedrate)</Fit></div>
      <div className="absolute top-[390px] left-[117px] font-['Liberation_Sans',sans-serif] text-[22px] leading-[24px] text-[#111] [-webkit-text-stroke:0.3px_#111]"><Fit w={289}>Internal web speed(feedrate)</Fit></div>
      <div className="absolute bottom-0 left-0 flex h-[28px] w-[63px] items-center gap-[4px] border-2 border-black bg-gradient-to-r from-[#e8e8e8] to-[#6e6e6e] pl-px">
        <svg width="24" height="24"><rect x=".5" y=".5" width="23" height="23" rx="2" fill="#fcd116" stroke="#111" /><path d="M4 18l3-6 1 5 4-9 0 9 5-11-1 10 4-7" fill="none" stroke="#9a4d00" strokeWidth="2" /></svg>
        <svg width="24" height="24"><rect x=".5" y=".5" width="23" height="23" rx="2" fill="#a6a6a6" stroke="#111" /><path d="M12 5v6" stroke="#111" strokeWidth="3" /><path d="M7.500 10h9L12 15zM5 16h14v1.500H5z" fill="#111" /><path d="M5 19h14" stroke="#111" strokeWidth="2" strokeDasharray="1.500 1" /></svg>
      </div>
    </div>
  );
}

function GroupBox({ label, w, h, plus, children }: { label: string; w: number; h: number; plus?: boolean; children: React.ReactNode }) {
  return (
    <div className="flex flex-col overflow-hidden rounded-[4px] border border-[#8f8f8f] bg-[#e7e7e7]" style={{ width: w, height: h }}>
      <div className="grow">{children}</div>
      <div className="relative flex h-[13px] shrink-0 items-center justify-center bg-[#262626] font-['Liberation_Sans',sans-serif] text-[11px] leading-none text-[#eee]">
        <span className={plus ? "mr-2.5" : ""}>{label}</span>
        {plus && <span className="absolute right-[2px] text-[10px] text-[#bbb]">+</span>}
      </div>
    </div>
  );
}

function Grasshopper() {
  return (
    <div className="absolute top-[7px] left-[496px] flex h-[688px] w-[869px] flex-col border-b-2 border-l-2 border-[#3c88bd] bg-[#f0f0f0] shadow-[0_3px_12px_rgba(0,0,0,0.5)]">
      <div className="flex h-[31px] shrink-0 items-center bg-[#0078d7] pl-[7px] text-[12px] text-white"><Fit w={104}>Grasshopper - new*</Fit></div>
      <Labels
        className="h-[27px] shrink-0 bg-gradient-to-b from-[#fcfdfe] to-[#f3f3f3] pl-[12px] text-[12px] text-black"
        items={[["File", 37, 18], ["Edit", 39, 20], ["View", 44, 25], ["Display", 57, 38], ["Solution", 63, 44], ["Help", 40, 25]]}
      />
      <Labels
        className="h-[22px] shrink-0 border-b border-[#9b9b9b] bg-[#f1f1f1] pl-[8px] font-['Liberation_Sans',sans-serif] text-[11px] text-[#6d6d6d]"
        items={[["Prm", 36, 20], ["Math", 41, 24], ["Set", 34, 16], ["Vec", 35, 19], ["Crv", 34, 18], ["Srf", 31, 14], ["Msh", 39, 21], ["Int", 28, 12], ["Trns", 39, 22], ["Dis", 33, 16], ["M+", 33, 15], ["DIVA 4", 51, 34], ["Fly", 31, 16], ["Extra", 43, 26], ["Mosquito", 63, 45], ["Wb", 34, 16], ["G", 29, 8], ["B", 28, 7], ["P", 26, 7], ["M", 30, 9], ["K", 28, 7], ["K", 28, 7], ["L", 29, 6], ["I", 27, 3], ["A", 20, 7]]}
      />
      <div className="flex h-[89px] shrink-0 items-start gap-[4px] border-b-2 border-[#5c5c5c] bg-gradient-to-b from-[#d5d5d5] to-[#f1f1f1] pt-[3px] pl-[2px]">
        <GroupBox label="Forms" w={61} h={73} plus>
          <svg width="59" height="57" viewBox="500 91 59 57">
            <path d="M508 116c9 1 5-7 7-13 1-5 2-8 7-7" fill="none" stroke="#222" strokeWidth="1.500" />
            <clipPath id="ball"><circle cx="543.500" cy="106" r="11" /></clipPath>
            <circle cx="543.500" cy="106" r="11" fill="#777" />
            <path clipPath="url(#ball)" d="M530 97.500h28M530 102h28M530 106.500h28M530 111h28M530 115.500h28" stroke="#111" strokeWidth="2.400" />
            <g fill="none" stroke="#111" strokeWidth="1.500"><ellipse cx="516" cy="132" rx="11" ry="6" fill="#fff" /><path d="M505 133c2 14 20 14 22 0" strokeWidth="1" /><path d="M521 130c-3-4-13-2-12 2s13 3 12 0-8-2-7 0 4 1 4 0" /></g>
          </svg>
        </GroupBox>
        <div className="ml-[-1px]">
          <GroupBox label="I/O" w={33} h={45}>
            <svg width="31" height="30"><g fill="#fbfbfb"><path d="M11 7h4v4h-4zM19 7h4v4h-4zM7 11h4v4H7zM15 11h4v4h-4zM11 15h4v4h-4zM19 15h4v4h-4zM7 19h4v3H7zM15 19h4v4h-4z" /></g></svg>
          </GroupBox>
        </div>
        <div className="-ml-px">
          <GroupBox label="Silkworm" w={61} h={73}>
            <svg width="59" height="57" viewBox="600 91 59 57">
              <path d="M604 106c0-14 23-13 23 1 0 11-17 11-17 0 0-8 12-8 12 0 0 5-7 5-7 0 0-2 3-2 3 0M606 112c5 8 16 6 19 0" fill="none" stroke="#333" strokeWidth="1.800" />
              <g stroke="#222" strokeWidth="1.200" fill="#111"><path d="M645 106l9-9M645 106l8 9M645 106h-9M616 135v-10M616 135l-9 7M616 135l9 7" strokeDasharray="2 1" /><path d="M633 106l5-3v6zM656 94v6l-6-3zM656 118v-6l-6 3zM616 122l3 6h-6zM604 146l2-6 4 5zM628 146l-2-6-4 5z" /></g>
              <path d="M633 135c5-8 15-8 20 0-5 8-15 8-20 0z" fill="#fff" stroke="#111" strokeWidth="2" /><circle cx="643" cy="135" r="5" fill="#111" /><circle cx="643.500" cy="134.500" r="1.500" fill="#fff" />
            </svg>
          </GroupBox>
        </div>
      </div>
      <div className="flex h-[31px] shrink-0 items-center bg-gradient-to-b from-white to-[#f0f0f0] pl-[5px] text-[12px] text-black">
        <svg width="20" height="22"><path d="M4 8V1h9l4 4v6z" fill="#fff" stroke="#557b4a" /><path d="M.500 21V7h5l2 3h11v11z" fill="#6fc52f" stroke="#2d6a17" /><path d="M1.500 12h16v3h-16z" fill="#a8e36b" /></svg>
        <svg width="22" height="22" className="ml-[9px]"><path d="M.500.500h21v21H3l-2.500-2z" fill="#2a66d4" stroke="#0c2a74" /><path d="M4 1h14v10H4z" fill="#f4f7fc" /><path d="M6 4h10M6 7h10" stroke="#7b93c0" /><path d="M5 14h12v7H5z" fill="#cfdaf0" /><path d="M7 15h4v6H7z" fill="#173c8e" /></svg>
        <i className="ml-[8px] h-[20px] w-px bg-[#ccc]" />
        <div className="ml-[4px] flex h-[23px] w-[136px] items-center border border-[#666] bg-white pl-[2px]">
          <Fit w={22}>85%</Fit>
          <svg width="10" height="8" className="mr-1 ml-auto"><path d="M1 1.500l4 4 4-4" fill="none" stroke="#555" /></svg>
        </div>
        <svg width="24" height="24" className="ml-[5px]"><path d="M3 9V3h6M15 3h6v6M21 15v6h-6M9 21H3v-6" fill="none" stroke="#222" strokeWidth="4" /><path d="M9.500 9.500l5 5M14.500 9.500l-5 5" stroke="#333" strokeWidth="1.600" /></svg>
        <svg width="6" height="4" className="ml-[4px]"><path d="M0 0h6L3 3.500z" /></svg>
        <svg width="24" height="20" className="ml-[8px]"><path d="M1 10C6 1 17 1 23 10 17 19 6 19 1 10z" fill="#e8f4fa" stroke="#222" strokeWidth="1.500" /><circle cx="12" cy="10" r="6" fill="#4aa6d8" stroke="#175178" /><circle cx="12" cy="10" r="2.800" fill="#0b2336" /><circle cx="10.500" cy="8" r="1.300" fill="#fff" /></svg>
        <svg width="6" height="4" className="ml-[5px]"><path d="M0 0h6L3 3.500z" /></svg>
        <svg width="24" height="24" className="ml-[6px]"><path d="M1 10c5-4 5 0 3 5-1 4 0 6 4 5" fill="none" stroke="#222" strokeWidth="1.500" /><path d="M8 20l2-8 9-10 3 1 0 7-9 9z" fill="#e0322a" stroke="#8d0f0f" /><path d="M8 20l2-8 5 6z" fill="#6a1010" /><path d="M13 11l7-7" stroke="#ff8d80" strokeWidth="2" /></svg>
      </div>
      <div className="pl-px"><Canvas /></div>
      <div className="flex grow items-center border-t border-white pl-[8px] text-[12px] text-black"><span className="mt-1.5">...</span></div>
    </div>
  );
}

export default function App() {
  return (
    <div className="relative h-[739px] w-[1365px] overflow-hidden font-['Open_Sans','Noto_Sans',sans-serif] leading-[15px]">
      <Rhino />
      <Grasshopper />
    </div>
  );
}
